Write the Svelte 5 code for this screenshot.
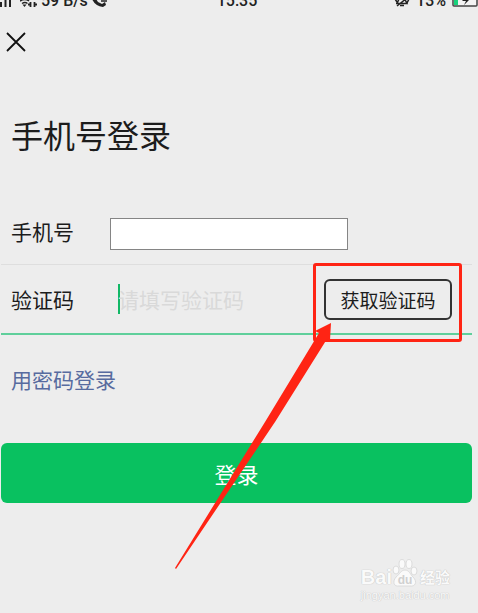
<script>
    let phone = $state('');
    let code = $state('');
</script>

<main>
    <!-- Status bar -->
    <div class="status">
        <div class="status-side">
            <svg class="signal" viewBox="0 0 12 16" aria-hidden="true">
                <path d="M1 10v5M5.500 4v11M10 0v15" stroke="#222" stroke-width="2" />
            </svg>
            <svg class="wifi" viewBox="0 0 17 16" aria-hidden="true">
                <path d="M0 9q5-3 9 0M2 11.500q3-2 5.500 0" fill="none" stroke="#222" stroke-width="1.500" />
                <path d="M4.500 15l-2-2.500h4z" fill="#222" />
                <path d="M10.500 10v5M14.500 10v5M8 12.500h3M14 12.500h3" stroke="#222" stroke-width="1.800" />
            </svg>
            <span>59 B/s</span>
            <svg class="call" viewBox="0 0 18 16" aria-hidden="true">
                <path d="M0 7l4 0 2 3 4 2 3-2 1 3-3 2q-8-1-11-8z" fill="#222" />
                <path d="M9 9h6" stroke="#222" stroke-width="1.500" />
            </svg>
        </div>
        <span class="clock">15:35</span>
        <div class="status-side end">
            <svg class="bell" viewBox="0 0 16 16" aria-hidden="true">
                <path d="M2 11.500h11l-2-4M5 7l-2 4.500M6 13.500h4M1 7l2 3M15 7l-2 4M3 14L13 6" fill="none" stroke="#222" stroke-width="1.500" />
            </svg>
            <span>13%</span>
            <svg class="battery" viewBox="0 0 26 16" aria-hidden="true">
                <rect x="1" y="3" width="24" height="11" rx="1" fill="#f4f4f4" stroke="#444" stroke-width="1.500" />
                <rect x="2" y="4" width="4" height="9" fill="#18d27c" />
                <path d="M15 4l-5 5h4l-2 4 5-5h-3z" fill="#222" />
            </svg>
        </div>
    </div>

    <button class="close" type="button" aria-label="关闭">
        <svg viewBox="0 0 20 20" aria-hidden="true">
            <path d="M1 1L19 19M19 1L1 19" stroke="#111" stroke-width="1.800" />
        </svg>
    </button>

    <h1>手机号登录</h1>

    <form onsubmit={(e) => e.preventDefault()}>
        <div class="row">
            <label for="phone">手机号</label>
            <input id="phone" class="phone" type="tel" bind:value={phone} />
        </div>

        <div class="row active">
            <label for="code">验证码</label>
            <span class="caret"></span>
            <input id="code" class="code" type="text" placeholder="请填写验证码" bind:value={code} />
            <div class="get-code">
                <button type="button">获取验证码</button>
                <span class="highlight"></span>
                <svg class="arrow" viewBox="0 0 160 250" aria-hidden="true">
                    <path d="M156 3L155 20L152 19L100 102L1 249L0 248L90 102L144 13L140 11Z" fill="#ff2414" />
                </svg>
            </div>
        </div>

        <a class="switch" href="#password">用密码登录</a>
        <button class="login" type="submit">登录</button>
    </form>

    <!-- Watermark -->
    <footer>
        <div class="brand">
            <span class="bai">Bai</span>
            <svg viewBox="0 0 26 30" aria-hidden="true">
                <g fill="#fafafa" stroke="#dcdcdc">
                    <ellipse cx="4" cy="12" rx="3" ry="4" />
                    <ellipse cx="10" cy="6" rx="3" ry="4.500" />
                    <ellipse cx="17" cy="6" rx="3" ry="4.500" />
                    <ellipse cx="22" cy="13" rx="3" ry="4" />
                    <path d="M13 12c4 0 5 4 8 7 5 5 2 10-3 9H7c-5 1-7-4-3-9 4-3 5-7 9-7z" />
                </g>
                <text x="13" y="26" text-anchor="middle">du</text>
            </svg>
            <span class="jingyan">经验</span>
        </div>
        <div class="site">jingyan.baidu.com</div>
    </footer>
</main>

<style>
    :global(body) {
        margin: 0;
        background: #ededed;
    }

    main {
        font-family: "Noto Sans CJK SC", sans-serif;
        color: #1c1c1c;
        overflow: hidden;
    }

    button,
    input {
        font-family: inherit;
        color: inherit;
        box-sizing: border-box;
    }

    .status {
        display: flex;
        align-items: flex-end;
        height: 8px;
        overflow: hidden;
        font-family: Roboto, sans-serif;
        font-size: 16px;
        font-weight: 500;
        line-height: 20px;
        color: #222;
    }

    .status svg {
        height: 16px;
        flex: none;
    }

    .status span {
        height: 17px;
    }

    .status-side {
        flex: 1;
        display: flex;
        align-items: flex-end;
        gap: 4px;
    }

    .end {
        justify-content: flex-end;
        gap: 6px;
    }

    .signal {
        width: 12px;
        margin-right: 4px;
    }

    .wifi {
        width: 17px;
    }

    .call {
        width: 18px;
    }

    .clock {
        margin-right: 4px;
    }

    .bell {
        width: 16px;
    }

    .battery {
        width: 26px;
    }

    .close {
        display: block;
        margin: 24px 6px 0;
        padding: 0;
        width: 20px;
        height: 20px;
        border: 0;
        background: none;
        cursor: pointer;
    }

    .close svg {
        display: block;
        width: 20px;
        height: 20px;
    }

    h1 {
        margin: 58px 11px 0;
        font-size: 32px;
        font-weight: 400;
        line-height: 48px;
    }

    form {
        margin: 40px 6px 0 1px;
    }

    .row {
        display: flex;
        align-items: center;
        height: 66px;
        padding-left: 10px;
        border-bottom: 1px solid #dedede;
    }

    .row.active {
        height: 68px;
        padding-right: 20px;
        border-bottom: 2px solid #5fcf9b;
    }

    label {
        width: 99px;
        flex: none;
        font-size: 21px;
        line-height: 32px;
    }

    .phone {
        width: 66%;
        max-width: 238px;
        height: 32px;
        margin-top: 6px;
        padding: 0 8px;
        border: 1px solid #858585;
        border-radius: 0;
        background: #fff;
        font-size: 21px;
    }

    .caret {
        width: 2px;
        height: 30px;
        margin: 0 -2px 0 8px;
        flex: none;
        background: #12b866;
    }

    .code {
        flex: 1;
        min-width: 0;
        height: 32px;
        padding: 0;
        border: 0;
        outline: none;
        background: none;
        font-size: 21px;
    }

    .code::placeholder {
        color: #d9d9d9;
        opacity: 1;
    }

    .get-code {
        position: relative;
        flex: none;
    }

    .get-code button {
        display: block;
        width: 128px;
        height: 41px;
        padding: 0;
        border: 2px solid #333;
        border-radius: 6px;
        background: none;
        font-size: 19px;
        cursor: pointer;
    }

    .highlight {
        position: absolute;
        inset: -16px -10px -22px -11px;
        border: 3px solid #ff2414;
        border-radius: 3px;
        pointer-events: none;
    }

    .arrow {
        position: absolute;
        top: 41px;
        right: 117px;
        width: 160px;
        height: 250px;
        pointer-events: none;
    }

    .switch {
        display: block;
        width: fit-content;
        margin: 28px 10px 0;
        font-size: 21px;
        line-height: 32px;
        color: #576b9f;
        text-decoration: none;
    }

    .login {
        display: block;
        width: 100%;
        height: 60px;
        margin-top: 48px;
        padding: 0;
        border: 0;
        border-radius: 6px;
        background: #09c160;
        color: #fff;
        font-size: 22px;
        cursor: pointer;
    }

    footer {
        width: fit-content;
        margin: 55px 28px 0 auto;
        color: #fafafa;
        text-shadow: 0 0 1px #c4c4c4, 0 0 1px #c4c4c4;
    }

    .brand {
        display: flex;
        align-items: flex-end;
        height: 30px;
        line-height: 22px;
    }

    .brand svg {
        width: 26px;
        height: 30px;
        flex: none;
    }

    .brand text {
        font: bold 12px "Liberation Sans", sans-serif;
        fill: #d0d0d0;
        text-shadow: none;
    }

    .bai {
        font-family: "Liberation Sans", sans-serif;
        font-size: 20px;
        font-weight: 700;
    }

    .jingyan {
        margin-left: 2px;
        font-size: 15px;
        font-weight: 700;
    }

    .site {
        font-family: "Liberation Sans", sans-serif;
        font-size: 11px;
        line-height: 14px;
    }
</style>
